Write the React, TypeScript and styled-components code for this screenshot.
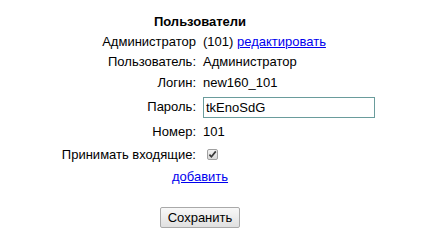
import React from 'react';
import styled, { createGlobalStyle } from 'styled-components';

const GlobalStyle = createGlobalStyle`
  html, body {
    margin: 0;
    padding: 0;
    background: #ffffff;
  }
  body {
    font-family: "Liberation Sans", Arial, sans-serif;
    font-size: 13px;
    color: #000000;
  }
`;

const Page = styled.div`
  width: 400px;
  padding-top: 14px;
  display: flex;
  flex-direction: column;
  align-items: center;
`;

const Title = styled.h3`
  margin: 0 0 2px 0;
  font-size: 13px;
  font-weight: bold;
  line-height: 16px;
`;

// row heights follow the original table's cell padding
const Form = styled.div`
  align-self: flex-start;
  display: grid;
  grid-template-columns: 196px 172px;
  grid-template-rows: 20px 20px 22px 26px 24px 22px;
  column-gap: 7px;
  align-items: center;
`;

const Label = styled.div`
  text-align: right;
  line-height: 16px;
  white-space: nowrap;
`;

const Value = styled.div`
  display: flex;
  align-items: center;
  line-height: 16px;
  white-space: nowrap;
`;

const Link = styled.a`
  color: #0000ee;
  text-decoration: underline;
  cursor: pointer;
`;

const TextInput = styled.input`
  box-sizing: border-box;
  width: 172px;
  height: 21px;
  margin: 0;
  padding: 1px 2px;
  border: 1px solid #6a9c9c;
  font-family: "Liberation Sans", Arial, sans-serif;
  font-size: 13px;
  color: #000;
  outline: none;
`;

const CheckBox = styled.span`
  display: inline-flex;
  align-items: center;
  justify-content: center;
  box-sizing: border-box;
  width: 11px;
  height: 11px;
  margin-left: 4px;
  margin-top: -1px;
  border: 1px solid #a0a0a0;
  border-radius: 2px;
  background: linear-gradient(#f2f2f2, #d9d9d9);
`;

const AddRow = styled.div`
  margin-top: 3px;
  line-height: 16px;
`;

const SaveButton = styled.button`
  margin-top: 22px;
  height: 21px;
  padding: 0 7px;
  border: 1px solid #a9a9a9;
  border-radius: 2px;
  background: linear-gradient(#f8f8f8, #e0e0e0);
  font-family: "Liberation Sans", Arial, sans-serif;
  font-size: 13px;
  color: #000;
`;

export default function App() {
  return (
    <>
      <GlobalStyle />
      <Page>
        <Title>Пользователи</Title>
        <Form>
          <Label>Администратор</Label>
          <Value>
            (101)&nbsp;<Link>редактировать</Link>
          </Value>
          <Label>Пользователь:</Label>
          <Value>Администратор</Value>
          <Label>Логин:</Label>
          <Value>new160_101</Value>
          <Label>Пароль:</Label>
          <Value>
            <TextInput defaultValue="tkEnoSdG" />
          </Value>
          <Label>Номер:</Label>
          <Value>101</Value>
          <Label>Принимать входящие:</Label>
          <Value>
            <CheckBox>
              <svg width="9" height="9" viewBox="0 0 9 9">
                <path d="M1.4 4.6 L3.4 6.8 L7.8 1.4" fill="none" stroke="#3a3a3a" strokeWidth="1.7" />
              </svg>
            </CheckBox>
          </Value>
        </Form>
        <AddRow>
          <Link>добавить</Link>
        </AddRow>
        <SaveButton>Сохранить</SaveButton>
      </Page>
    </>
  );
}
